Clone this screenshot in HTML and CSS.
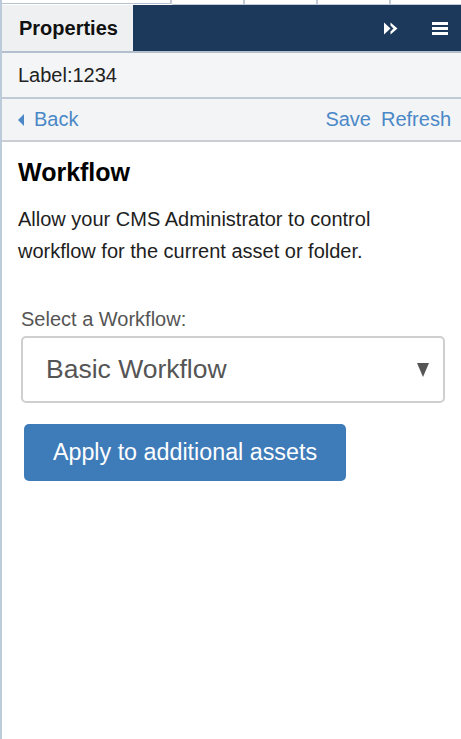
FILE: index.html
```html
<!DOCTYPE html>
<html lang="en">
<head>
<meta charset="utf-8">
<title>Properties</title>
<link rel="stylesheet" href="styles.css">
</head>
<body>
<div class="panel">
  <div class="top-strip">
    <div class="strip-cell strip-first"></div>
    <div class="strip-cell"></div>
    <div class="strip-cell"></div>
    <div class="strip-cell"></div>
    <div class="strip-cell strip-last"></div>
  </div>
  <div class="header">
    <div class="tab">Properties</div>
    <div class="header-bar">
      <svg class="icon-ff" width="14" height="13" viewBox="0 0 14 13" aria-hidden="true">
        <path d="M0 0.5 L6.5 6.5 L0 12.5 Z" fill="#fff"/>
        <path d="M6.5 0.5 L13.5 6.5 L6.5 12.5 L6.5 9.5 L9.5 6.5 L6.5 3.5 Z" fill="#fff"/>
      </svg>
      <svg class="icon-menu" width="16" height="13" viewBox="0 0 16 13" aria-hidden="true">
        <rect x="0" y="0" width="16" height="3" fill="#fff"/>
        <rect x="0" y="5" width="16" height="3" fill="#fff"/>
        <rect x="0" y="10" width="16" height="3" fill="#fff"/>
      </svg>
    </div>
  </div>
  <div class="label-row">Label:1234</div>
  <div class="nav-row">
    <a class="nav-link back-link" href="#"><span class="caret-left"></span>Back</a>
    <div class="nav-actions">
      <a class="nav-link" href="#">Save</a>
      <a class="nav-link" href="#">Refresh</a>
    </div>
  </div>
  <div class="content">
    <h2 class="title">Workflow</h2>
    <p class="desc">Allow your CMS Administrator to control workflow for the current asset or folder.</p>
    <div class="form-group">
      <div class="field-label">Select a Workflow:</div>
      <div class="select-box">
        <span class="select-value">Basic Workflow</span>
        <span class="select-arrow"></span>
      </div>
    </div>
    <button class="btn-apply" type="button">Apply to additional assets</button>
  </div>
</div>
</body>
</html>
```

FILE: styles.css
```css
html, body {
  margin: 0;
  padding: 0;
  background: #ffffff;
}

body {
  font-family: "Liberation Sans", Arial, sans-serif;
  color: #222;
}

.panel {
  min-height: 739px;
  border-left: 2px solid #bccbda;
  box-sizing: border-box;
  display: flex;
  flex-direction: column;
}

.top-strip {
  display: flex;
  height: 5px;
  background: #fff;
}

.strip-cell {
  width: 73px;
  border-right: 2px solid #c2cbd5;
  border-bottom: 1px solid #c2cbd5;
  box-sizing: border-box;
}

.strip-first {
  width: 170px;
  height: 4px;
  border-bottom: 1px solid #b7c2ce;
}

.strip-last {
  flex: 1;
  border-right: none;
}

.header {
  display: flex;
  height: 48px;
  border-bottom: 2px solid #b3bfcc;
  box-sizing: border-box;
}

.tab {
  width: 131px;
  background: #eef0f2;
  font-weight: bold;
  font-size: 20px;
  color: #111;
  padding-left: 17px;
  box-sizing: border-box;
  display: flex;
  align-items: center;
}

.header-bar {
  flex: 1;
  background: #1c395b;
  display: flex;
  justify-content: flex-end;
  align-items: center;
  gap: 34px;
  padding-right: 13px;
}

.icon-ff, .icon-menu {
  display: block;
}

.label-row {
  height: 46px;
  background: #f4f5f7;
  border-bottom: 2px solid #c0cad6;
  box-sizing: border-box;
  font-size: 20px;
  color: #222;
  padding-left: 16px;
  display: flex;
  align-items: center;
}

.nav-row {
  height: 43px;
  background: #f3f4f6;
  border-bottom: 2px solid #cacdd1;
  box-sizing: border-box;
  display: flex;
  align-items: center;
  justify-content: space-between;
  padding: 0 10px 0 16px;
}

.nav-link {
  color: #4a88c7;
  text-decoration: none;
  font-size: 20px;
}

.back-link {
  display: flex;
  align-items: center;
}

.caret-left {
  width: 0;
  height: 0;
  border-top: 6px solid transparent;
  border-bottom: 6px solid transparent;
  border-right: 6px solid #4a88c7;
  margin-right: 10px;
}

.nav-actions {
  display: flex;
  gap: 10px;
}

.content {
  padding: 0 16px 0 16px;
}

.title {
  font-size: 25px;
  font-weight: bold;
  color: #000;
  line-height: 28px;
  margin: 16px 0 0 0;
}

.desc {
  font-size: 20px;
  line-height: 32px;
  margin: 17px 0 0 0;
  color: #1e1e1e;
}

.form-group {
  margin-top: 40px;
  padding-left: 3px;
}

.field-label {
  font-size: 20px;
  line-height: 24px;
  color: #555;
}

.select-box {
  margin-top: 5px;
  height: 67px;
  border: 2px solid #cfcfcf;
  border-radius: 5px;
  box-sizing: border-box;
  display: flex;
  align-items: center;
  justify-content: space-between;
  padding: 0 14px 0 23px;
}

.select-value {
  font-size: 26.5px;
  color: #555;
}

.select-arrow {
  width: 0;
  height: 0;
  border-left: 6.5px solid transparent;
  border-right: 6.5px solid transparent;
  border-top: 14px solid #555;
}

.btn-apply {
  display: block;
  margin: 21px 0 0 6px;
  width: 322px;
  height: 57px;
  background: #3e7bb9;
  color: #fff;
  border: none;
  border-radius: 5px;
  font-family: "Liberation Sans", Arial, sans-serif;
  font-size: 23.3px;
  padding: 0;
}
```
